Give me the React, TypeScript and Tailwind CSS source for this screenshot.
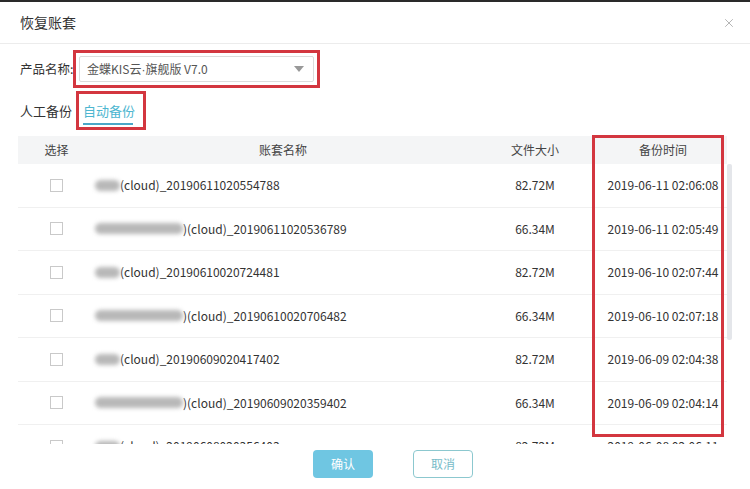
import { X } from 'lucide-react';

interface Row {
  blur: number;
  name: string;
  size: string;
  time: string;
}

const rows: Row[] = [
  { blur: 25, name: '(cloud)_20190611020554788', size: '82.72M', time: '2019-06-11 02:06:08' },
  { blur: 88, name: ')(cloud)_20190611020536789', size: '66.34M', time: '2019-06-11 02:05:49' },
  { blur: 25, name: '(cloud)_20190610020724481', size: '82.72M', time: '2019-06-10 02:07:44' },
  { blur: 88, name: ')(cloud)_20190610020706482', size: '66.34M', time: '2019-06-10 02:07:18' },
  { blur: 25, name: '(cloud)_20190609020417402', size: '82.72M', time: '2019-06-09 02:04:38' },
  { blur: 88, name: ')(cloud)_20190609020359402', size: '66.34M', time: '2019-06-09 02:04:14' },
  { blur: 25, name: '(cloud)_20190608020356403', size: '82.72M', time: '2019-06-08 02:06:11' },
];

const font = { fontFamily: '"Noto Sans CJK SC", "Noto Sans", sans-serif' };

export default function App() {
  return (
    <div
      className="relative h-[489px] w-[750px] overflow-hidden border-t-2 border-[#2a2a2a] bg-white text-[#333]"
      style={font}
    >
      {/* header */}
      <div className="flex h-[42px] items-center justify-between border-b border-[#ececec] pl-[20px] pr-[14px]">
        <span className="text-[14px]">恢复账套</span>
        <X className="h-[14px] w-[14px] text-[#aaa]" strokeWidth={1.5} />
      </div>

      {/* product select */}
      <div className="mt-[6px] flex h-[38px] items-center pl-[20px]">
        <span className="w-[53px] shrink-0 whitespace-nowrap text-[12.5px]">产品名称:</span>
        <div className="h-[38px] w-[247px] shrink-0 border-[3px] border-[#d3363f] p-[3px]">
          <div className="flex h-[26px] items-center justify-between rounded-[2px] border border-[#dcdcdc] pl-[7px] pr-[9px]">
            <span className="whitespace-nowrap text-[12px] text-[#555]">
              金蝶KIS云<span style={{ fontFamily: '"Liberation Sans", sans-serif' }}>·</span>旗舰版 V7.0
            </span>
            <span className="h-0 w-0 border-x-[5px] border-t-[6px] border-x-transparent border-t-[#999]" />
          </div>
        </div>
      </div>

      {/* tabs */}
      <div className="mt-[3px] flex h-[39px] items-center pl-[20px]">
        <span className="w-[56px] shrink-0 text-[13px]">人工备份</span>
        <div className="relative flex h-[39px] w-[70px] items-center border-[3px] border-[#d3363f] pl-[4px]">
          <span className="text-[13px] text-[#4db6d0]">自动备份</span>
          <span className="absolute bottom-[2px] left-[4px] h-[2px] w-[50px] bg-[#4aa7c8]" />
        </div>
      </div>

      {/* table */}
      <div className="relative mt-[6px] ml-[18px] w-[709px]">
        <div className="flex h-[28px] items-center bg-[#f4f5f6] text-[12px] text-[#444]">
          <div className="w-[77px] text-center">选择</div>
          <div className="w-[376px] text-center">账套名称</div>
          <div className="w-[128px] text-center">文件大小</div>
          <div className="w-[128px] text-center">备份时间</div>
        </div>
        <div className="h-[280px] overflow-hidden">
          {rows.map((r, i) => (
            <div
              key={i}
              className="flex h-[43.5px] items-center border-b border-[#f0f0f0] text-[12px]"
            >
              <div className="flex w-[77px] justify-center">
                <span className="h-[13px] w-[13px] border border-[#c9c9c9] bg-white" />
              </div>
              <div className="flex w-[376px] items-center">
                <span
                  className="h-[11px] rounded-full bg-[#b8b8b8] blur-[2px]"
                  style={{ width: r.blur }}
                />
                <span>{r.name}</span>
              </div>
              <div className="w-[128px] text-center">{r.size}</div>
              <div className="w-[128px] text-center">{r.time}</div>
            </div>
          ))}
        </div>
        {/* scrollbar */}
        <div className="absolute left-[709px] top-[28px] h-[176px] w-[5px] rounded-[2px] bg-[#e4e6ea]" />
      </div>

      {/* highlight on time column */}
      <div className="absolute left-[592px] top-[133px] h-[302px] w-[132px] border-[3px] border-[#d3363f]" />

      {/* footer */}
      <div className="mt-[6px] flex gap-[40px] pl-[313px]">
        <button className="h-[28px] w-[60px] rounded-[4px] bg-[#6fc6e2] text-[12px] text-white">
          确认
        </button>
        <button className="h-[28px] w-[60px] rounded-[4px] border border-[#8cc8cf] bg-white text-[12px] text-[#78bcc8]">
          取消
        </button>
      </div>
    </div>
  );
}
